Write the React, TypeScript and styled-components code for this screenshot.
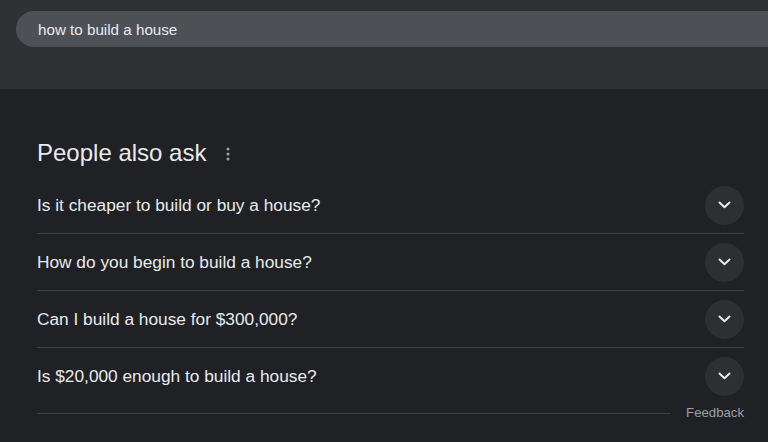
import React from "react";
import styled, { createGlobalStyle } from "styled-components";

const Global = createGlobalStyle`
  html, body {
    margin: 0;
    padding: 0;
    background: #202124;
    font-family: "Liberation Sans", Arial, sans-serif;
    overflow: hidden;
  }
`;

const Page = styled.div`
  width: 768px;
  height: 442px;
  background: #202124;
  overflow: hidden;
`;

const Header = styled.header`
  height: 89px;
  box-sizing: border-box;
  padding: 11px 0 0 16px;
  background: #303134;
  overflow: hidden;
`;

const SearchBar = styled.div`
  height: 36px;
  display: flex;
  align-items: center;
  padding-left: 22px;
  background: #4d5156;
  border-radius: 18px 0 0 18px;
  color: #e8eaed;
  font-size: 15.2px;
`;

const Main = styled.main`
  padding: 48px 24px 0 37px;
`;

const HeadingRow = styled.div`
  display: flex;
  align-items: center;
  gap: 20px;
  height: 32px;
  margin-bottom: 8px;
`;

const Heading = styled.h2`
  margin: 0;
  font-weight: 400;
  font-size: 24px;
  line-height: 32px;
  color: #e8eaed;
`;

const MoreButton = styled.span`
  display: flex;
  align-items: center;
  color: #9aa0a6;
  margin-top: 2px;
`;

const Row = styled.div<{ $last?: boolean }>`
  height: 56px;
  display: flex;
  align-items: center;
  justify-content: space-between;
  border-bottom: ${(p) => (p.$last ? "none" : "1px solid #3c4043")};
`;

const Question = styled.span`
  font-size: 17.3px;
  line-height: 24px;
  color: #e8eaed;
`;

const ExpandButton = styled.span`
  width: 39px;
  height: 39px;
  border-radius: 50%;
  background: #2e2f32;
  display: flex;
  align-items: center;
  justify-content: center;
  color: #e8eaed;
`;

const Footer = styled.div`
  display: flex;
  align-items: center;
  gap: 15px;
  height: 16px;
  margin-top: 1px;
`;

const FooterLine = styled.div`
  flex: 1;
  height: 1px;
  background: #3c4043;
`;

const FeedbackLink = styled.span`
  font-size: 13.2px;
  line-height: 16px;
  color: #9aa0a6;
`;

const Dots = () => (
  <svg width="4" height="14" viewBox="0 0 4 14" fill="currentColor">
    <circle cx="2" cy="2" r="1.5" />
    <circle cx="2" cy="7" r="1.5" />
    <circle cx="2" cy="12" r="1.5" />
  </svg>
);

const Chevron = () => (
  <svg width="13" height="8" viewBox="0 0 13 8" fill="none">
    <path
      d="M1.5 1.5 L6.5 6.2 L11.5 1.5"
      stroke="currentColor"
      strokeWidth="2"
      strokeLinecap="round"
      strokeLinejoin="round"
    />
  </svg>
);

const questions = [
  "Is it cheaper to build or buy a house?",
  "How do you begin to build a house?",
  "Can I build a house for $300,000?",
  "Is $20,000 enough to build a house?",
];

export default function App() {
  return (
    <Page>
      <Global />
      <Header>
        <SearchBar>how to build a house</SearchBar>
      </Header>
      <Main>
        <HeadingRow>
          <Heading>People also ask</Heading>
          <MoreButton>
            <Dots />
          </MoreButton>
        </HeadingRow>
        {questions.map((q, i) => (
          <Row key={q} $last={i === questions.length - 1}>
            <Question>{q}</Question>
            <ExpandButton>
              <Chevron />
            </ExpandButton>
          </Row>
        ))}
        <Footer>
          <FooterLine />
          <FeedbackLink>Feedback</FeedbackLink>
        </Footer>
      </Main>
    </Page>
  );
}
